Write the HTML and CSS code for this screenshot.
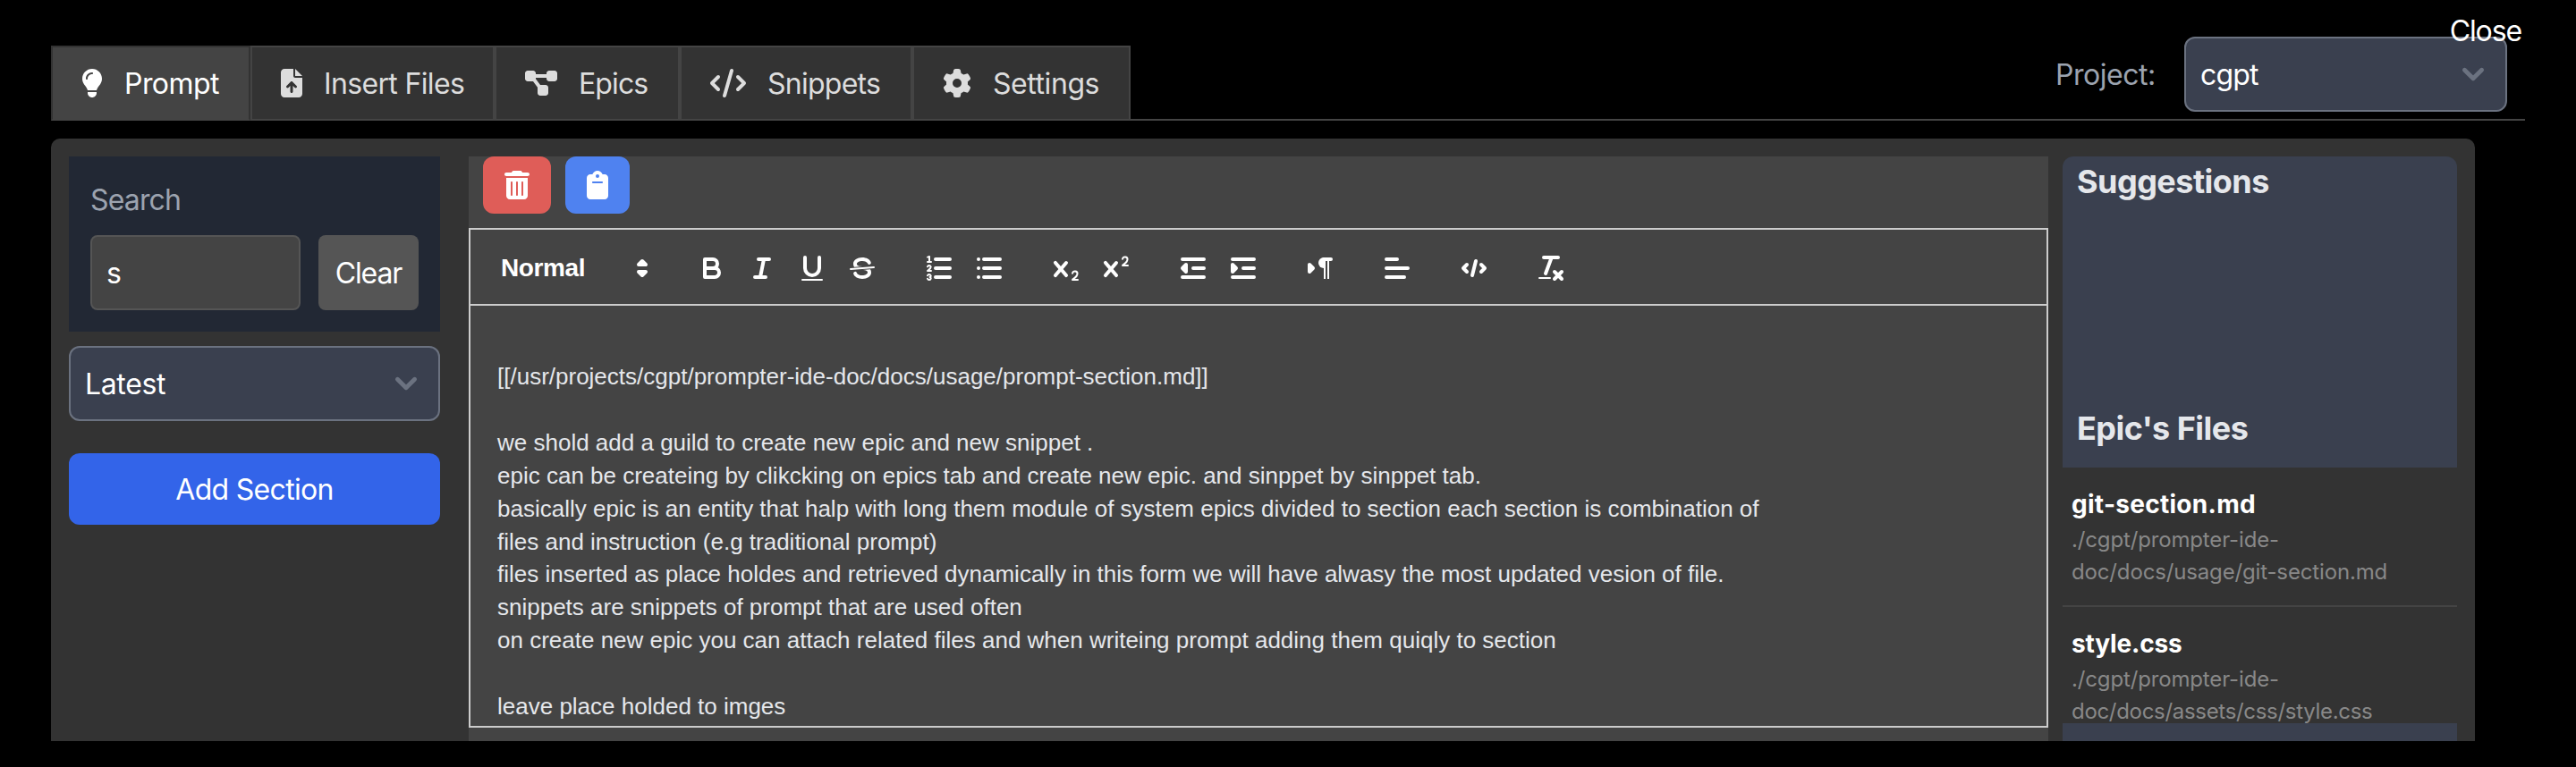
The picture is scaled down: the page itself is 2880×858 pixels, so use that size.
FILE: index.html
```html
<!DOCTYPE html>
<html lang="en">
<head>
<meta charset="utf-8">
<title>Prompt editor</title>
<link rel="stylesheet" href="styles.css">
</head>
<body>
<header class="topbar">
  <nav class="tabs">
    <a class="tab tab-prompt active"><svg class="fa" width="24" height="32" viewBox="0 0 384 512"><path d="M272 384c9.6-31.9 29.5-59.1 49.2-86.2l0 0c5.2-7.1 10.4-14.2 15.4-21.4c19.8-28.5 31.4-63 31.4-100.3C368 78.8 289.2 0 192 0S16 78.8 16 176c0 37.3 11.6 71.9 31.4 100.3c5 7.2 10.2 14.3 15.4 21.4l0 0c19.8 27.1 39.7 54.4 49.2 86.2H272zM192 512c44.2 0 80-35.8 80-80V416H112v16c0 44.2 35.8 80 80 80zM112 176c0 8.8-7.2 16-16 16s-16-7.2-16-16c0-61.9 50.1-112 112-112c8.8 0 16 7.2 16 16s-7.2 16-16 16c-44.2 0-80 35.8-80 80z"/></svg><span>Prompt</span></a>
    <a class="tab tab-files"><svg class="fa" width="24" height="32" viewBox="0 0 384 512"><path d="M64 0C28.7 0 0 28.7 0 64V448c0 35.3 28.7 64 64 64H320c35.3 0 64-28.7 64-64V160H256c-17.7 0-32-14.3-32-32V0H64zM256 0V128H384L256 0zM216 408c0 13.3-10.7 24-24 24s-24-10.7-24-24V305.9l-31 31c-9.4 9.4-24.6 9.4-33.9 0s-9.4-24.6 0-33.9l72-72c9.4-9.4 24.6-9.4 33.9 0l72 72c9.4 9.4 9.4 24.6 0 33.9s-24.6 9.4-33.9 0l-31-31V408z"/></svg><span>Insert Files</span></a>
    <a class="tab tab-epics"><svg class="fa" width="36" height="32" viewBox="0 0 576 512"><path d="M0 80C0 53.5 21.5 32 48 32h96c26.5 0 48 21.5 48 48V96H384V80c0-26.5 21.5-48 48-48h96c26.5 0 48 21.5 48 48v96c0 26.5-21.5 48-48 48H432c-26.5 0-48-21.5-48-48V160H192v16c0 1.7-.1 3.4-.3 5L272 288h96c26.5 0 48 21.5 48 48v96c0 26.5-21.5 48-48 48H272c-26.5 0-48-21.5-48-48V336c0-1.7 .1-3.4 .3-5L144 224H48c-26.5 0-48-21.5-48-48V80z"/></svg><span>Epics</span></a>
    <a class="tab tab-snippets"><svg class="fa" width="40" height="32" viewBox="0 0 640 512"><path d="M392.8 1.2c-17-4.9-34.7 5-39.6 22l-128 448c-4.9 17 5 34.7 22 39.6s34.7-5 39.6-22l128-448c4.9-17-5-34.7-22-39.6zm80.6 120.1c-12.5 12.5-12.5 32.8 0 45.3L562.7 256l-89.4 89.4c-12.5 12.5-12.5 32.8 0 45.3s32.8 12.5 45.3 0l112-112c12.5-12.5 12.5-32.8 0-45.3l-112-112c-12.5-12.5-32.8-12.5-45.3 0zm-306.7 0c-12.5-12.5-32.8-12.5-45.3 0l-112 112c-12.5 12.5-12.5 32.8 0 45.3l112 112c12.5 12.5 32.8 12.5 45.3 0s12.5-32.8 0-45.3L77.3 256l89.4-89.4c12.5-12.5 12.5-32.8 0-45.3z"/></svg><span>Snippets</span></a>
    <a class="tab tab-settings"><svg class="fa" width="32" height="32" viewBox="0 0 512 512"><path d="M495.9 166.6c3.2 8.7 .5 18.4-6.4 24.6l-43.3 39.4c1.1 8.3 1.7 16.8 1.7 25.4s-.6 17.1-1.7 25.4l43.3 39.4c6.9 6.2 9.6 15.9 6.4 24.6c-4.4 11.9-9.7 23.3-15.8 34.3l-4.7 8.1c-6.6 11-14 21.4-22.1 31.2c-5.9 7.2-15.7 9.6-24.5 6.8l-55.7-17.7c-13.4 10.3-28.2 18.9-44 25.4l-12.5 57.1c-2 9.1-9 16.3-18.2 17.8c-13.8 2.3-28 3.5-42.5 3.5s-28.7-1.2-42.5-3.5c-9.2-1.5-16.2-8.7-18.2-17.8l-12.5-57.1c-15.8-6.5-30.6-15.1-44-25.4L83.1 425.9c-8.8 2.8-18.6 .3-24.5-6.8c-8.1-9.8-15.5-20.2-22.1-31.2l-4.7-8.1c-6.1-11-11.4-22.4-15.8-34.3c-3.2-8.7-.5-18.4 6.4-24.6l43.3-39.4C64.6 273.1 64 264.6 64 256s.6-17.1 1.7-25.4L22.4 191.2c-6.9-6.2-9.6-15.9-6.4-24.6c4.4-11.9 9.7-23.3 15.8-34.3l4.7-8.1c6.6-11 14-21.4 22.1-31.2c5.9-7.2 15.7-9.6 24.5-6.8l55.7 17.7c13.4-10.3 28.2-18.9 44-25.4l12.5-57.1c2-9.1 9-16.3 18.2-17.8C227.3 1.2 241.5 0 256 0s28.7 1.2 42.5 3.5c9.2 1.5 16.2 8.7 18.2 17.8l12.5 57.1c15.8 6.5 30.6 15.1 44 25.4l55.7-17.7c8.8-2.8 18.6-.3 24.5 6.8c8.1 9.8 15.5 20.2 22.1 31.2l4.7 8.1c6.1 11 11.4 22.4 15.8 34.3zM256 336a80 80 0 1 0 0-160 80 80 0 1 0 0 160z"/></svg><span>Settings</span></a>
  </nav>
  <div class="project">
    <span class="project-label">Project:</span>
    <div class="select project-select"><span>cgpt</span><svg class="chevron" width="48" height="48" viewBox="0 0 20 20"><path d="M6 8l4 4 4-4"/></svg></div>
  </div>
  <span class="close">Close</span>
</header>

<main class="panel">
  <aside class="left">
    <section class="search">
      <span class="search-label">Search</span>
      <div class="search-row">
        <div class="search-input">s</div>
        <div class="clear">Clear</div>
      </div>
    </section>
    <div class="select sort"><span>Latest</span><svg class="chevron" width="48" height="48" viewBox="0 0 20 20"><path d="M6 8l4 4 4-4"/></svg></div>
    <div class="add">Add Section</div>
  </aside>

  <section class="main">
    <div class="actions">
      <div class="btn btn-delete"><svg class="fa" width="28" height="32" viewBox="0 0 448 512"><path d="M135.2 17.7C140.6 6.8 151.7 0 163.8 0H284.2c12.1 0 23.2 6.8 28.6 17.7L320 32h96c17.7 0 32 14.3 32 32s-14.3 32-32 32H32C14.3 96 0 81.7 0 64S14.3 32 32 32h96l7.2-14.3zM32 128H416V448c0 35.3-28.7 64-64 64H96c-35.3 0-64-28.7-64-64V128zm96 64c-8.8 0-16 7.2-16 16V432c0 8.8 7.2 16 16 16s16-7.2 16-16V208c0-8.8-7.2-16-16-16zm96 0c-8.8 0-16 7.2-16 16V432c0 8.8 7.2 16 16 16s16-7.2 16-16V208c0-8.8-7.2-16-16-16zm96 0c-8.8 0-16 7.2-16 16V432c0 8.8 7.2 16 16 16s16-7.2 16-16V208c0-8.8-7.2-16-16-16z"/></svg></div>
      <div class="btn btn-copy"><svg class="fa" width="24" height="32" viewBox="0 0 384 512"><path d="M192 0c-41.8 0-77.4 26.7-90.5 64H64C28.7 64 0 92.7 0 128V448c0 35.3 28.7 64 64 64H320c35.3 0 64-28.7 64-64V128c0-35.3-28.7-64-64-64H282.5C269.4 26.7 233.8 0 192 0zm0 64a32 32 0 1 1 0 64 32 32 0 1 1 0-64zM112 192H272c8.8 0 16 7.2 16 16s-7.2 16-16 16H112c-8.8 0-16-7.2-16-16s7.2-16 16-16z"/></svg></div>
    </div>
    <div class="toolbar">
      <div class="format"><span>Normal</span><svg class="ql" viewBox="0 0 18 18"><polygon class="sf" points="7 11 9 13 11 11 7 11"/><polygon class="sf" points="7 7 9 5 11 7 7 7"/></svg></div>
      <div class="group">
        <svg class="ql" viewBox="0 0 18 18"><path d="M5,4H9.5A2.5,2.5,0,0,1,12,6.5v0A2.5,2.5,0,0,1,9.5,9H5V4Z"/><path d="M5,9h5.5A2.5,2.5,0,0,1,13,11.5v0A2.5,2.5,0,0,1,10.5,14H5V9Z"/></svg>
        <svg class="ql" viewBox="0 0 18 18"><path d="M7,4H13M5,14H11M8,14L10,4"/></svg>
        <svg class="ql" viewBox="0 0 18 18"><path d="M5,3V9a4.012,4.012,0,0,0,4,4H9a4.012,4.012,0,0,0,4-4V3"/><rect class="f" x="3" y="15" width="12" height="1" rx=".5"/></svg>
        <svg class="ql" viewBox="0 0 18 18"><path class="thin" d="M15.5,8.5L2.5,9.5"/><path class="f" d="M9.007,8C6.542,7.791,6,7.519,6,6.5,6,5.792,7.283,5,9,5c1.571,0,2.765.679,2.969,1.309a1,1,0,0,0,1.9-.617C13.356,4.106,11.354,3,9,3,6.2,3,4,4.538,4,6.5a3.2,3.2,0,0,0,.5,1.843Z"/><path class="f" d="M8.984,10C11.457,10.208,12,10.479,12,11.5c0,0.708-1.283,1.5-3,1.5-1.571,0-2.765-.679-2.969-1.309a1,1,0,1,0-1.9.617C4.644,13.894,6.646,15,9,15c2.8,0,5-1.538,5-3.5a3.2,3.2,0,0,0-.5-1.843Z"/></svg>
      </div>
      <div class="group">
        <svg class="ql" viewBox="0 0 18 18"><path d="M7,4H15M7,9H15M7,14H15"/><path class="thin" d="M2.5,5.5H4.5"/><path class="f" d="M3.5,6A0.5,0.5,0,0,1,3,5.5V3.085l-0.276.138A0.5,0.5,0,0,1,2.053,3c-0.124-.247-0.023-0.324.224-0.447l1-.5A0.5,0.5,0,0,1,4,2.5v3A0.5,0.5,0,0,1,3.5,6Z"/><path class="thin" d="M4.5,10.5h-2c0-.234,1.85-1.076,1.85-2.234A0.959,0.959,0,0,0,2.5,8.156"/><path class="thin" d="M2.5,14.846a0.959,0.959,0,0,0,1.85-.109A0.7,0.7,0,0,0,3.75,14a0.688,0.688,0,0,0,.6-0.736,0.959,0.959,0,0,0-1.85-.109"/></svg>
        <svg class="ql" viewBox="0 0 18 18"><path d="M6,4H15M6,9H15M6,14H15M3,4H3M3,9H3M3,14H3"/></svg>
      </div>
      <div class="group">
        <svg class="ql" viewBox="0 0 18 18"><path class="f" d="M15.5,15H13.861a3.858,3.858,0,0,0,1.914-2.975,1.8,1.8,0,0,0-1.6-1.751A1.921,1.921,0,0,0,12.021,11.7a0.5,0.5,0,1,0,.957.291h0a0.914,0.914,0,0,1,1.053-.725,0.81,0.81,0,0,1,.744.762c0,1.076-1.17,1.87-1.94,2.431A1.456,1.456,0,0,0,12,15.5a0.5,0.5,0,0,0,.5.5h3A0.5,0.5,0,0,0,15.5,15Z"/><path class="f" d="M9.65,5.241a1,1,0,0,0-1.409.108L6,7.964,3.759,5.349A1,1,0,0,0,2.192,6.592Q2.215,6.621,2.241,6.649L4.684,9.5,2.241,12.35A1,1,0,0,0,3.71,13.707q0.026-.028.049-0.057L6,11.036,8.241,13.65a1,1,0,1,0,1.567-1.243Q9.785,12.378,9.759,12.35L7.316,9.5,9.759,6.651A1,1,0,0,0,9.65,5.241Z"/></svg>
        <svg class="ql" viewBox="0 0 18 18"><path class="f" d="M15.5,7H13.861a4.015,4.015,0,0,0,1.914-2.975,1.8,1.8,0,0,0-1.6-1.751A1.922,1.922,0,0,0,12.021,3.7a0.5,0.5,0,1,0,.957.291,0.917,0.917,0,0,1,1.053-.725,0.81,0.81,0,0,1,.744.762c0,1.077-1.164,1.925-1.934,2.486A1.423,1.423,0,0,0,12,7.5a0.5,0.5,0,0,0,.5.5h3A0.5,0.5,0,0,0,15.5,7Z"/><path class="f" d="M9.65,5.241a1,1,0,0,0-1.409.108L6,7.964,3.759,5.349A1,1,0,0,0,2.192,6.592Q2.215,6.621,2.241,6.649L4.684,9.5,2.241,12.35A1,1,0,0,0,3.71,13.707q0.026-.028.049-0.057L6,11.036,8.241,13.65a1,1,0,1,0,1.567-1.243Q9.785,12.378,9.759,12.35L7.316,9.5,9.759,6.651A1,1,0,0,0,9.65,5.241Z"/></svg>
      </div>
      <div class="group">
        <svg class="ql" viewBox="0 0 18 18"><path d="M3,14H15M3,4H15M9,9H15"/><polygon class="sf" points="5 7 5 11 3 9 5 7"/></svg>
        <svg class="ql" viewBox="0 0 18 18"><path d="M3,14H15M3,4H15M9,9H15"/><polygon class="sf" points="3 7 3 11 5 9 3 7"/></svg>
      </div>
      <div class="group">
        <svg class="ql" viewBox="0 0 18 18"><polygon class="sf" points="3 11 5 9 3 7 3 11"/><path d="M15,4H11"/><path class="f" d="M11,3a3,3,0,0,0,0,6h1V3H11Z"/><rect class="f" height="11" width="1" x="11" y="4"/><rect class="f" height="11" width="1" x="13" y="4"/></svg>
      </div>
      <div class="group">
        <svg class="ql" viewBox="0 0 18 18"><path d="M3,9H15M3,14H13M3,4H9"/></svg>
      </div>
      <div class="group">
        <svg class="ql" viewBox="0 0 18 18"><polyline points="5 7 3 9 5 11"/><polyline points="13 7 15 9 13 11"/><path d="M10,5L8,13"/></svg>
      </div>
      <div class="group">
        <svg class="ql" viewBox="0 0 18 18"><path d="M5,3H13M6,12L9.35,3M11,11L15,15M15,11L11,15"/><rect class="f" height="1" rx=".5" width="7" x="2" y="14"/></svg>
      </div>
    </div>
    <div class="editor">
      <p><br></p>
      <p>[[/usr/projects/cgpt/prompter-ide-doc/docs/usage/prompt-section.md]]</p>
      <p><br></p>
      <p>we shold add a guild to create new epic and new snippet .</p>
      <p>epic can be createing by clikcking on epics tab and create new epic. and sinppet by sinppet tab.</p>
      <p>basically epic is an entity that halp with long them module of system epics divided to section each section is combination of</p>
      <p>files and instruction (e.g traditional prompt)</p>
      <p>files inserted as place holdes and retrieved dynamically in this form we will have alwasy the most updated vesion of file.</p>
      <p>snippets are snippets of prompt that are used often</p>
      <p>on create new epic you can attach related files and when writeing prompt adding them quiqly to section</p>
      <p><br></p>
      <p>leave place holded to imges</p>
    </div>
  </section>

  <aside class="right">
    <div class="heads">
      <h2>Suggestions</h2>
      <h2 class="h-epic">Epic's Files</h2>
    </div>
    <div class="files">
      <div class="file"><div class="name name-git">git-section.md</div><div class="path">./cgpt/prompter-ide-<br>doc/docs/usage/git-section.md</div></div>
      <div class="file"><div class="name">style.css</div><div class="path">./cgpt/prompter-ide-<br><span class="path-css">doc/docs/assets/css/style.css</span></div></div>
    </div>
    <div class="right-foot"></div>
  </aside>
</main>
</body>
</html>
```
FILE: styles.css
```css
* { box-sizing: border-box; }

body {
  margin: 0;
  width: 2880px;
  height: 858px;
  overflow: hidden;
  background: #000;
  color: #fff;
  font: 32px/48px Inter, "Liberation Sans", sans-serif;
  letter-spacing: -0.7px;
}

svg { display: block; flex: none; }
.fa { fill: currentColor; }

/* Top bar */
.topbar {
  position: relative;
  display: flex;
  justify-content: space-between;
  width: 2766px;
  height: 135px;
  margin-left: 57px;
  padding-right: 20px;
  border-bottom: 2px solid #444;
}
.tabs { display: flex; margin: 51px 0 -2px; }
.tab {
  display: flex;
  align-items: center;
  gap: 24px;
  height: 84px;
  padding-left: 32px;
  border: 2px solid #444;
  background: #333;
  color: #ddd;
  white-space: nowrap;
}
.tab span, .project-label, .select span { padding-top: 2px; }
.tab.active { background: #444; border-color: #333; border-bottom-color: #444; color: #fff; }
.tab-prompt { width: 223px; letter-spacing: -0.55px; }
.tab-files { width: 273px; letter-spacing: -0.65px; }
.tab-epics { width: 207px; letter-spacing: -0.9px; }
.tab-snippets { width: 260px; letter-spacing: -0.74px; }
.tab-settings { width: 244px; letter-spacing: -0.43px; }

.project { display: flex; align-items: center; height: 84px; margin-top: 41px; }
.project-label { width: 144px; color: #9ca3af; letter-spacing: -0.47px; }
.select {
  display: flex;
  align-items: center;
  justify-content: space-between;
  height: 84px;
  padding: 0 12px 0 16px;
  border: 2px solid #6b7280;
  border-radius: 12px;
  background: #3a404f;
}
.project-select { width: 361px; letter-spacing: -0.83px; }
.chevron { fill: none; stroke: #6b7280; stroke-width: 2; stroke-linecap: round; stroke-linejoin: round; }
.close { position: absolute; top: 11px; right: 4px; letter-spacing: -1.1px; }

/* Panel */
.panel {
  display: flex;
  width: 2710px;
  height: 674px;
  margin: 20px 0 0 57px;
  padding: 20px 20px 0;
  border-radius: 10px 10px 0 0;
  background: #333;
}

.left { width: 415px; }
.search { height: 196px; padding: 25px 24px 0; background: #222834; }
.search-label { display: block; margin-bottom: 15px; color: #9ca3af; letter-spacing: -0.85px; }
.search-row { display: flex; gap: 20px; }
.search-input {
  width: 235px;
  height: 84px;
  padding: 17px 16px;
  border: 2px solid #555;
  border-radius: 8px;
  background: #444;
}
.clear {
  width: 112px;
  height: 84px;
  border-radius: 8px;
  background: #555;
  line-height: 85px;
  text-align: center;
  letter-spacing: -1.1px;
}
.sort { margin-top: 16px; letter-spacing: -0.35px; }
.add {
  height: 80px;
  margin-top: 36px;
  border-radius: 12px;
  background: #3364e9;
  line-height: 82px;
  text-align: center;
}

/* Editor column */
.main { width: 1766px; margin-left: 32px; background: #444; }
.actions { display: flex; gap: 16px; height: 80px; padding-left: 16px; }
.btn { display: flex; align-items: center; justify-content: center; height: 64px; border-radius: 12px; }
.btn-delete { width: 76px; background: #df5d58; }
.btn-copy { width: 72px; background: #4f82f0; }

.toolbar {
  display: flex;
  align-items: center;
  gap: 50px;
  height: 87px;
  padding: 3px 0 0 34px;
  border: 2px solid #ccc;
}
.format {
  display: flex;
  align-items: center;
  justify-content: space-between;
  width: 176px;
  margin-right: -8px;
  font: bold 28px/36px "Liberation Sans", Arial, sans-serif;
  letter-spacing: -0.4px;
}
.group { display: flex; gap: 20px; }
.ql { width: 36px; height: 36px; fill: none; stroke: #fff; stroke-width: 2; stroke-linecap: round; stroke-linejoin: round; }
.ql .thin { stroke-width: 1; }
.ql .f { fill: #fff; stroke: none; }
.ql .sf { fill: #fff; }

.editor {
  height: 472px;
  padding: 24px 30px;
  border: 2px solid #ccc;
  border-top: 0;
  color: #e5e7eb;
  font: 26px/36.92px "Liberation Sans", Arial, sans-serif;
  letter-spacing: 0;
}
.editor p { margin: 0; white-space: nowrap; }

/* Right column */
.right { display: flex; flex-direction: column; width: 441px; margin-left: 16px; }
.heads { height: 348px; padding: 0 16px; border-radius: 12px 12px 0 0; background: #3a404f; }
.heads h2 { margin: 0; color: #e5e7eb; font-size: 36px; font-weight: 700; line-height: 56px; letter-spacing: -0.53px; }
.heads .h-epic { margin-top: 220px; }
.files { height: 286px; overflow: hidden; }
.file { height: 156px; padding: 20px 10px 0; border-bottom: 2px solid #444; }
.name { font-size: 28px; font-weight: 700; line-height: 42px; letter-spacing: -0.16px; }
.name-git { letter-spacing: 0.28px; }
.path { padding-top: 1px; color: #888; font-size: 24px; line-height: 36px; letter-spacing: -0.15px; }
.path-css { letter-spacing: -0.31px; }
.right-foot { flex: 1; background: #3a404f; }
```
